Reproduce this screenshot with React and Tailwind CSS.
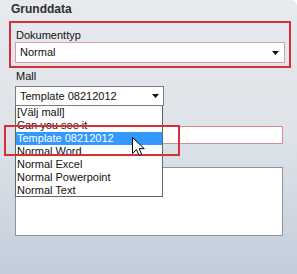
import React from 'react';

const templates = [
  '[Välj mall]',
  'Can you see it',
  'Template 08212012',
  'Normal Word',
  'Normal Excel',
  'Normal Powerpoint',
  'Normal Text',
];

const Arrow = () => (
  <svg width="7" height="4" viewBox="0 0 7 4" className="shrink-0">
    <path d="M0 0h7L3.5 4z" fill="#111" />
  </svg>
);

const App = () => {
  return (
    <div className="relative w-[297px] h-[274px] overflow-hidden rounded-tr-[6px] bg-gradient-to-b from-[#e7eaee] via-[#dee3e9] to-[#c3cedb] font-['Liberation_Sans',Arial,sans-serif] text-[11px] text-[#111]">
      <h2 className="pl-[11px] pt-[1px] h-[17px] leading-[16px] text-[12px] font-bold text-[#2e2e2e]">Grunddata</h2>

      {/* Dokumenttyp */}
      <div className="mt-[4px] ml-[9px] w-[282px] h-[47px] border-2 border-[#d52f3b] pl-[4px] pt-[6px]">
        <label className="block h-[13px] leading-[13px] pl-[1px]">Dokumenttyp</label>
        <div className="flex items-center justify-between w-[270px] h-[21px] bg-white border border-[#dc9aa1] pl-[4px] pr-[5px]">
          <span>Normal</span>
          <Arrow />
        </div>
      </div>

      {/* Mall */}
      <label className="block mt-[2px] ml-[16px] h-[13px] leading-[13px]">Mall</label>
      <div className="relative mt-[3px] ml-[15px]">
        <div className="flex items-center justify-between w-[149px] h-[20px] bg-white border border-[#7c7c7c] pl-[4px] pr-[4px]">
          <span>Template 08212012</span>
          <Arrow />
        </div>

        {/* fields hidden behind the open list */}
        <div className="h-[20px]" />
        <div className="w-[268px] h-[18px] bg-white border border-[#d98b93]" />
        <div className="h-[23px]" />
        <div className="w-[268px] h-[69px] bg-white border border-[#8d939b]" />

        {/* open dropdown */}
        <ul className="absolute left-0 top-[20px] w-[148px] h-[91px] bg-white border-x border-b border-[#646464]">
          {templates.map((t) => (
            <li
              key={t}
              className={
                t === 'Template 08212012'
                  ? 'h-[13px] leading-[13px] pl-[1px] bg-[#3399ff] text-white'
                  : 'h-[13px] leading-[13px] pl-[1px]'
              }
            >
              {t}
            </li>
          ))}
        </ul>
      </div>

      {/* annotation */}
      <div className="absolute left-[4px] top-[125px] w-[176px] h-[31px] border-2 border-[#d52f3b]" />

      {/* mouse cursor */}
      <svg className="absolute left-[132px] top-[137px]" width="13" height="20" viewBox="0 0 13 20">
        <path d="M0.5 0.5V16.5L4.5 12.6L7 18.5L9.6 17.4L7.2 11.6H12.3Z" fill="#fff" stroke="#000" strokeWidth="1" strokeLinejoin="miter" />
      </svg>
    </div>
  );
};

export default App;
